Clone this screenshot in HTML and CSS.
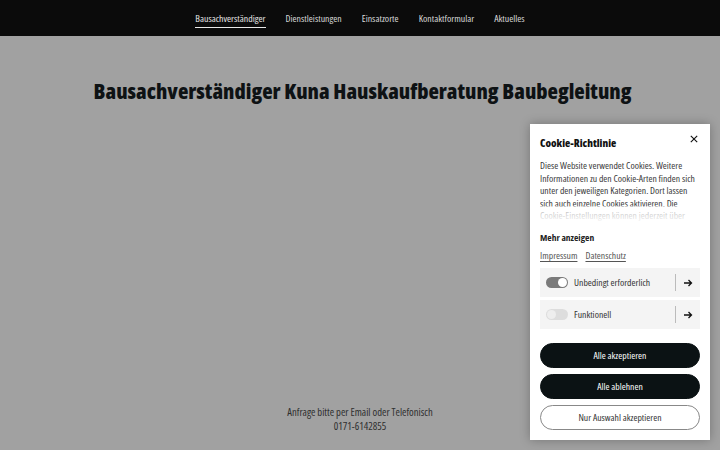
FILE: index.html
```html
<!DOCTYPE html>
<html lang="de">
<head>
<meta charset="utf-8">
<title>Bausachverständiger Kuna</title>
<link rel="stylesheet" href="styles.css">
</head>
<body>
<header class="nav">
  <a class="nav-item active">Bausachverständiger</a>
  <a class="nav-item">Dienstleistungen</a>
  <a class="nav-item">Einsatzorte</a>
  <a class="nav-item">Kontaktformular</a>
  <a class="nav-item">Aktuelles</a>
</header>
<main class="main">
  <h1 class="title">Bausachverständiger Kuna Hauskaufberatung Baubegleitung</h1>
  <div class="spacer"></div>
  <p class="contact">Anfrage bitte per Email oder Telefonisch<br>0171-6142855</p>
</main>
<aside class="cookie">
  <div class="cookie-head">
    <h2 class="cookie-title">Cookie-Richtlinie</h2>
    <svg class="close" viewBox="0 0 10 10" width="8" height="8"><path d="M1 1L9 9M9 1L1 9" stroke="#111" stroke-width="1.4" fill="none"/></svg>
  </div>
  <div class="cookie-text">
    <p>Diese Website verwendet Cookies. Weitere Informationen zu den Cookie-Arten finden sich unter den jeweiligen Kategorien. Dort lassen sich auch einzelne Cookies aktivieren. Die Cookie-Einstellungen können jederzeit über</p>
    <div class="fade"></div>
  </div>
  <div class="more">Mehr anzeigen</div>
  <div class="links"><a>Impressum</a><a>Datenschutz</a></div>
  <div class="row">
    <span class="toggle on"><span class="knob"></span></span>
    <span class="row-label">Unbedingt erforderlich</span>
    <span class="divider"></span>
    <svg class="arrow" viewBox="0 0 10 10" width="10" height="10"><path d="M1 5H8.5M5.5 2L8.5 5L5.5 8" stroke="#111" stroke-width="1.3" fill="none"/></svg>
  </div>
  <div class="row">
    <span class="toggle"><span class="knob"></span></span>
    <span class="row-label">Funktionell</span>
    <span class="divider"></span>
    <svg class="arrow" viewBox="0 0 10 10" width="10" height="10"><path d="M1 5H8.5M5.5 2L8.5 5L5.5 8" stroke="#111" stroke-width="1.3" fill="none"/></svg>
  </div>
  <div class="buttons">
    <button class="btn dark">Alle akzeptieren</button>
    <button class="btn dark">Alle ablehnen</button>
    <button class="btn outline">Nur Auswahl akzeptieren</button>
  </div>
</aside>
</body>
</html>
```
FILE: styles.css
```css
* { box-sizing: border-box; }
html, body { margin: 0; height: 100%; }
body {
  background: #a1a1a1;
  font-family: "Open Sans", Lato, sans-serif;
  font-stretch: 87.5%;
  position: relative;
  overflow: hidden;
}
.nav {
  height: 36px;
  background: #0b0b0b;
  display: flex;
  justify-content: center;
  align-items: center;
  gap: 20px;
}
.nav-item {
  color: #d8d8d8;
  font-size: 9.8px;
  line-height: 13px;
  padding: 3px 0 2px;
  border-bottom: 1px solid transparent;
}
.nav-item.active { border-bottom-color: #e8e8e8; color: #e4e4e4; }
.main {
  height: 414px;
  display: flex;
  flex-direction: column;
  align-items: center;
}
.title {
  margin: 40px 0 0;
  font-family: "Open Sans", sans-serif;
  font-stretch: 75%;
  font-weight: 800;
  font-size: 21.5px;
  line-height: 29px;
  color: #0e1214;
  padding-left: 5px;
}
.spacer { flex: 1; }
.contact {
  margin: 0 0 17px;
  text-align: center;
  font-size: 10.6px;
  line-height: 14px;
  color: #2f2f2f;
}
.cookie {
  position: absolute;
  left: 530px;
  top: 124px;
  width: 180px;
  height: 316px;
  background: #fff;
  box-shadow: 0 0 10px rgba(0,0,0,0.28);
  padding: 10px 10px 0;
}
.cookie-head {
  display: flex;
  justify-content: space-between;
  align-items: center;
  height: 16px;
}
.cookie-title {
  margin: 0;
  font-family: "Open Sans", sans-serif;
  font-stretch: 75%;
  font-weight: 800;
  font-size: 10.8px;
  color: #111;
}
.close { margin-right: 2px; margin-top: -6px; }
.cookie-text {
  position: relative;
  height: 64px;
  overflow: hidden;
  margin-top: 10px;
}
.cookie-text p {
  margin: 0;
  font-size: 9.7px;
  line-height: 12.6px;
  color: #3a3a3a;
}
.fade {
  position: absolute;
  left: 0; right: 0; bottom: 0;
  height: 18px;
  background: linear-gradient(rgba(255,255,255,0.55), #fff);
}
.more {
  margin-top: 8px;
  font-size: 9.5px;
  line-height: 12px;
  font-weight: 700;
  color: #222;
}
.links {
  margin-top: 6px;
  display: flex;
  gap: 8px;
  font-size: 9.7px;
  line-height: 12px;
  color: #555;
}
.links a { text-decoration: underline; text-underline-offset: 1.5px; }
.row {
  margin-top: 6px;
  height: 29px;
  background: #f4f4f4;
  display: flex;
  align-items: center;
  padding: 0 7px 0 6px;
}
.row + .row { margin-top: 3px; }
.toggle {
  width: 22px;
  height: 11px;
  border-radius: 6px;
  background: #ddd;
  position: relative;
  flex: none;
}
.toggle.on { background: #7a7a7a; }
.knob {
  position: absolute;
  top: 1px;
  left: 1px;
  width: 9px;
  height: 9px;
  border-radius: 50%;
  background: #eee;
}
.toggle.on .knob { left: 12px; background: #fff; }
.row-label {
  margin-left: 6px;
  font-size: 9.7px;
  color: #333;
  flex: 1;
}
.divider {
  width: 1px;
  height: 17px;
  background: #bbb;
  margin-right: 7px;
}
.arrow { flex: none; }
.buttons {
  margin-top: 14px;
  display: flex;
  flex-direction: column;
  gap: 6px;
}
.btn {
  height: 25px;
  border-radius: 13px;
  font-family: "Open Sans", Lato, sans-serif;
  font-stretch: 87.5%;
  font-size: 9.7px;
  border: 1px solid #0b1214;
  padding: 0;
}
.btn.dark { background: #0b1214; color: #fff; }
.btn.outline { background: #fff; color: #333; border-color: #888; }
```
